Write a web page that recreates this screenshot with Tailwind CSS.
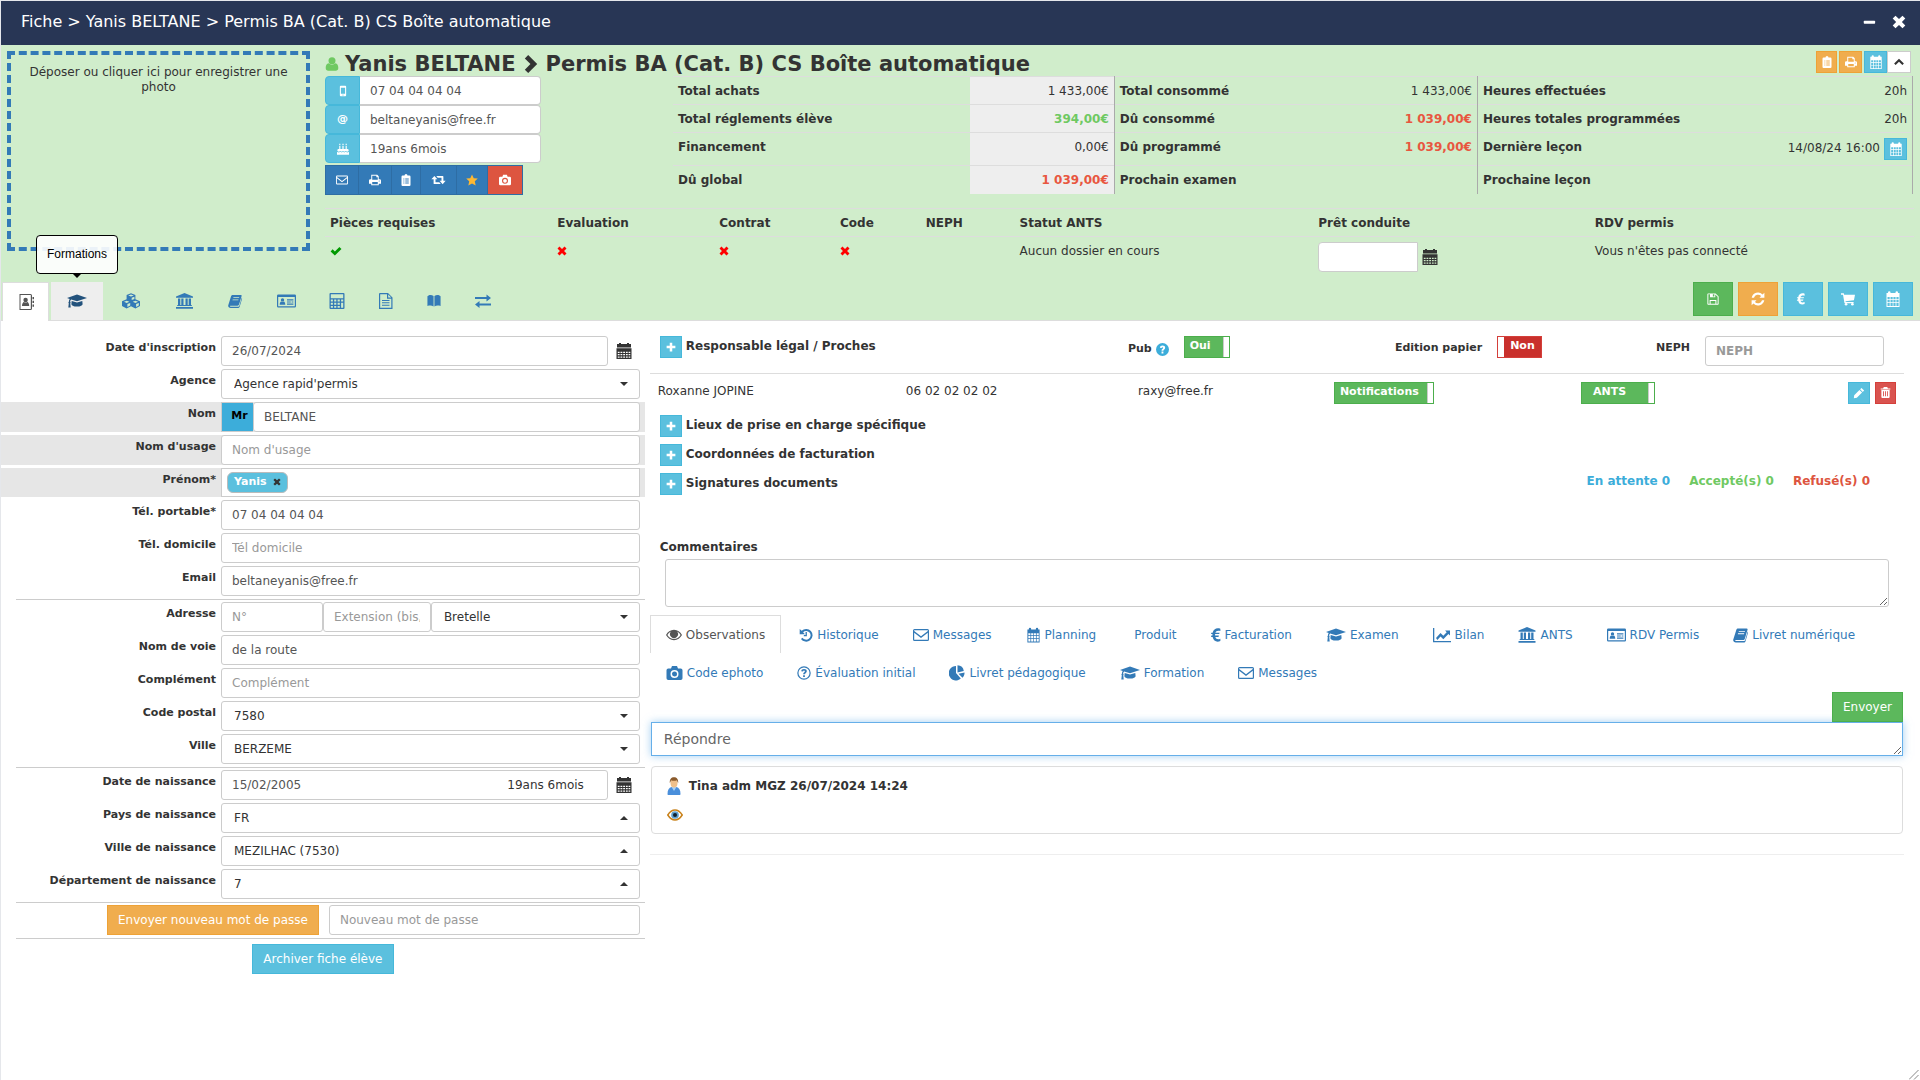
<!DOCTYPE html>
<html lang="fr">
  <head>
    <meta charset="UTF-8" />
    <meta name="viewport" content="width=device-width, initial-scale=1.0" />
    <title>Fiche | Yanis BELTANE</title>
    <script src="https://cdn.jsdelivr.net/npm/@tailwindcss/browser@4"></script>
  </head>
  <body
    class="min-h-screen flex flex-col bg-white border-l border-t border-gray-200 text-[#333] text-xs font-['DejaVu_Sans',Verdana,sans-serif]"
  >
    <!-- icon sprite -->
    <svg class="hidden" xmlns="http://www.w3.org/2000/svg">
      <symbol id="i-user" viewBox="0 0 16 16"><circle cx="8" cy="4.4" r="4" /><path d="M4.2 7.2C1.8 7.6.8 9.8.8 12.6.8 14.6 2 15.8 3.8 15.8h8.4c1.8 0 3-1.2 3-3.2 0-2.8-1-5-3.4-5.4a5.2 5.2 0 0 1-7.6 0Z" /></symbol>
      <symbol id="i-chevron" viewBox="0 0 16 16"><path d="M2.500 3 5.500 0l8 8-8 8-3-3 5-5Z" /></symbol>
      <symbol id="i-up" viewBox="0 0 16 16"><path d="m8 3.500 6.500 6.500-2 2L8 7.500 3.500 12l-2-2Z" /></symbol>
      <symbol id="i-mobile" viewBox="0 0 16 16"><path fill-rule="evenodd" d="M5 1h6a1.200 1.200 0 0 1 1.200 1.200v11.600A1.200 1.200 0 0 1 11 15H5a1.200 1.200 0 0 1-1.200-1.200V2.200A1.200 1.200 0 0 1 5 1Zm.2 2.500v8h5.600v-8Zm2.800 9a.8.8 0 1 0 0 1.600.8.8 0 0 0 0-1.600Z" /></symbol>
      <symbol id="i-cake" viewBox="0 0 16 16"><path d="M3 1h1.500v2H3zM7.200 1h1.600v2H7.200zM11.500 1H13v2h-1.500zM3 4h1.500v4h2.700V4h1.600v4h2.700V4H13v4h1a1.500 1.500 0 0 1 1.500 1.500v1l-2 1-2-1-1.800 1-1.700-1-1.700 1-1.800-1-2 1-2-1v-1A1.500 1.500 0 0 1 2 8h1ZM0 12l2.500.8 2-1 1.800 1 1.700-1 1.700 1 1.800-1 2 1L16 12v3.500H0Z" /></symbol>
      <symbol id="i-mail" viewBox="0 0 16 16"><path fill-rule="evenodd" d="M1.500 2h13A1.500 1.500 0 0 1 16 3.500v9a1.500 1.500 0 0 1-1.500 1.500h-13A1.500 1.500 0 0 1 0 12.500v-9A1.500 1.500 0 0 1 1.500 2Zm-.3 1.200v.8L8 9.300l6.800-5.300v-.8Zm0 2.600v7h13.600v-7L8 11Z" /></symbol>
      <symbol id="i-print" viewBox="0 0 16 16"><path fill-rule="evenodd" d="M3 1h8l2 2v4h1.200A1.800 1.800 0 0 1 16 8.800V13h-3v2H3v-2H0V8.800A1.800 1.800 0 0 1 1.800 7H3Zm1.300 1.300v5.200h7.400V4.200H9.800V2.300Zm0 8.500v3h7.400v-3ZM13.600 8.500a.7.7 0 1 0 0 1.400.7.7 0 0 0 0-1.400Z" /></symbol>
      <symbol id="i-clip" viewBox="0 0 16 16"><path fill-rule="evenodd" d="M6 2a2 2 0 0 1 4 0h2.500A1.500 1.500 0 0 1 14 3.500v11a1.500 1.500 0 0 1-1.500 1.500h-9A1.500 1.500 0 0 1 2 14.500v-11A1.500 1.500 0 0 1 3.500 2Zm-1.500 4v1.200h1.300V6Zm2.500 0v1.200h4.700V6ZM4.500 8.700v1.200h1.300V8.700Zm2.500 0v1.200h4.700V8.700Zm-2.500 2.700v1.200h1.300v-1.200Zm2.500 0v1.200h4.700v-1.200Z" /></symbol>
      <symbol id="i-retweet" viewBox="0 0 20 16"><path d="M4.500 2.500 8.500 7H6v4h5l2 2.300H4.200A.8.8 0 0 1 3.500 12.500V7H.5ZM7 2.700h8.800a.8.8 0 0 1 .7.800V9h3l-4 4.500-4-4.500H14V5H9Z" /></symbol>
      <symbol id="i-star" viewBox="0 0 16 16"><path d="m8 .5 2.300 5 5.500.6-4.100 3.700 1.200 5.500L8 12.500l-4.900 2.800 1.200-5.500L.2 6.100l5.500-.6Z" /></symbol>
      <symbol id="i-camera" viewBox="0 0 16 16"><path fill-rule="evenodd" d="M5.500 1h5l1 2.500h2.700A1.800 1.800 0 0 1 16 5.300v7.900a1.800 1.800 0 0 1-1.800 1.800H1.800A1.800 1.800 0 0 1 0 13.200V5.300a1.800 1.800 0 0 1 1.800-1.800h2.700ZM8 5a4 4 0 1 0 0 8 4 4 0 0 0 0-8Zm0 1.500a2.500 2.500 0 1 1 0 5 2.500 2.500 0 0 1 0-5Z" /></symbol>
      <symbol id="i-cal" viewBox="0 0 16 16"><path fill-rule="evenodd" d="M3 1.500a1.200 1.200 0 0 1 2.500 0V2h5v-.5a1.200 1.200 0 0 1 2.500 0V2h1.500v14h-13V2H3ZM2.500 6v2.200h2.200V6Zm3 0v2.200h2.200V6Zm2.900 0v2.200h2.200V6Zm3 0v2.200h2.200V6ZM2.500 9v2.300h2.200V9Zm3 0v2.300h2.200V9Zm2.900 0v2.300h2.200V9Zm3 0v2.300h2.200V9Zm-8.900 3.100V15h2.200v-2.900Zm3 0V15h2.200v-2.900Zm2.900 0V15h2.200v-2.900Zm3 0V15h2.200v-2.900Z" /></symbol>
      <symbol id="i-date" viewBox="0 0 16 16"><path fill-rule="evenodd" d="M1 1h2V0h2v1h6V0h2v1h2v3.500H1ZM.5 5.300h15V16H.5Zm1.300 3.400v1.300h1.800V8.700Zm2.700 0v1.300h1.800V8.700Zm2.700 0v1.300H9V8.700Zm2.700 0v1.300h1.800V8.700Zm2.700 0v1.300h1.700V8.700ZM1.800 11v1.300h1.800V11Zm2.700 0v1.300h1.800V11Zm2.700 0v1.300H9V11Zm2.700 0v1.300h1.800V11Zm2.700 0v1.300h1.700V11ZM1.800 13.400v1.300h1.800v-1.300Zm2.700 0v1.300h1.800v-1.300Zm2.700 0v1.300H9v-1.300Zm2.700 0v1.300h1.800v-1.300Zm2.700 0v1.300h1.700v-1.300Z" /></symbol>
      <symbol id="i-check" viewBox="0 0 16 16"><path d="m.8 8.500 2.700-2.700 3 3 6-6.300 2.800 2.700L6.500 14Z" /></symbol>
      <symbol id="i-x" viewBox="0 0 16 16"><path d="M4 .8 8 4.700 12 .8 15.200 4 11.300 8l3.900 4-3.200 3.200-4-3.900-4 3.900L.8 12l3.900-4L.8 4Z" /></symbol>
      <symbol id="i-minus" viewBox="0 0 16 16"><rect x="2" y="6.500" width="13" height="3.500" rx=".8" /></symbol>
      <symbol id="i-plus" viewBox="0 0 16 16"><path d="M6 1h4v5h5v4h-5v5H6v-5H1V6h5Z" /></symbol>
      <symbol id="i-book-user" viewBox="0 0 16 16"><path fill-rule="evenodd" d="M1.500 0h11A1.500 1.500 0 0 1 14 1.500v13a1.500 1.500 0 0 1-1.500 1.500h-11V0Zm1 1v14h10.300V1Z" /><circle cx="7.600" cy="6" r="2.200" /><path d="M4 12c0-2.500 1-3.800 2-4 1 .8 2.200.8 3.200 0 1 .2 2 1.500 2 4ZM14.500 3H16v2.300h-1.500zM14.500 6.800H16v2.300h-1.500zM14.500 10.500H16v2.300h-1.500z" /></symbol>
      <symbol id="i-grad" viewBox="0 0 20 16"><path d="M10 1.500 20 5l-10 3.300L4.200 6.500c-.8.600-1 1.300-1 2.300.5.300.5 1.200.1 1.500l.4 4.200H1.300l.5-4.200c-.5-.4-.4-1.200.1-1.500 0-1.100.2-2 .8-2.800L0 5ZM4.700 7.900 10 9.600l5.300-1.700.3 3c.1 1.500-2.600 2.600-5.600 2.600s-5.700-1.100-5.600-2.600Z" /></symbol>
      <symbol id="i-cubes" viewBox="0 0 20 16"><path fill-rule="evenodd" d="m10 .2 4.400 1.700v4.400l4.600 1.900v4.900L14.400 15.500 10 13.300l-4.400 2.200L1 13.100V8.200l4.600-1.900V1.900ZM7.200 2.500 10 3.600l2.800-1.100L10 1.400Zm3.500 2.300v2.300l2.700-1.100V3.700ZM3 8.800l2.700 1.100 2.700-1.100-2.700-1.100Zm3.400 2.300v2.800l2.800-1.400V9.900Zm5.300-2.300 2.700 1.100 2.700-1.100-2.700-1.100Zm3.400 2.300v2.800l2.700-1.400V9.900Z" /></symbol>
      <symbol id="i-bank" viewBox="0 0 17 16"><path d="M8.500 0 17 3.500v1.300H0V3.500ZM2 5.600h2.300v6.500h1V5.600h2.200v6.500h2V5.600h2.200v6.500h1V5.600H15v6.500h.8v1H1.200v-1H2ZM0 14h17v1.800H0Z" /></symbol>
      <symbol id="i-book" viewBox="0 0 16 16"><path fill-rule="evenodd" d="M5.500 1h9c.9 0 1.300.6 1 1.500L12.600 12c-.3.900-.9 1.300-1.800 1.300H3c-.7 0-.8.600-.3 1.200h8.800c.8 0 1.200-.4 1.500-1.200l2.700-9c.5.300.4.900.3 1.400l-2.600 8.600C13.100 15.400 12.400 16 11.300 16H3c-1.600 0-3-1.400-2.800-2.900L3.600 2.400C3.900 1.500 4.500 1 5.500 1Zm.8 2.600-.3 1h6.600l.3-1Zm-.9 2.600-.3 1h6.600l.3-1Z" /></symbol>
      <symbol id="i-card" viewBox="0 0 19 16"><path fill-rule="evenodd" d="M1.300 1.500h16.400A1.300 1.300 0 0 1 19 2.800v10.400a1.300 1.300 0 0 1-1.300 1.300H1.300A1.300 1.300 0 0 1 0 13.200V2.800a1.300 1.300 0 0 1 1.300-1.300ZM1.200 4v9.300h16.600V4Z" /><circle cx="5.500" cy="6.900" r="1.700" /><path d="M2.700 11.700c0-2 .7-3 1.600-3.300.7.600 1.700.6 2.400 0 .9.300 1.600 1.300 1.600 3.300ZM10 6.200h6.400v1.200H10zM10 8.400h3.800v1.200H10zM14.600 8.400h1.800v1.200h-1.800zM10 10.500h6.400v1.200H10z" /></symbol>
      <symbol id="i-calc" viewBox="0 0 16 16"><path fill-rule="evenodd" d="M1.500 0h13A1 1 0 0 1 15.500 1v14a1 1 0 0 1-1 1h-13a1 1 0 0 1-1-1V1a1 1 0 0 1 1-1Zm.3 1.200v4h12.400v-4ZM1.800 6.500v2h2.100v-2Zm3.400 0v2h2.100v-2Zm3.400 0v2h2.200v-2Zm3.500 0v2h2.100v-2ZM1.800 9.700v2h2.100v-2Zm3.400 0v2h2.100v-2Zm3.400 0v2h2.200v-2Zm3.500 0v5h2.100v-5ZM1.800 12.900v1.800h2.100v-1.800Zm3.400 0v1.800h2.100v-1.800Zm3.400 0v1.800h2.200v-1.800Z" /></symbol>
      <symbol id="i-file" viewBox="0 0 16 16"><path fill-rule="evenodd" d="M2 0h8l4.500 4.500V16H1V1a1 1 0 0 1 1-1Zm.2 1.200v13.600h11.100V5.700H9V1.200Zm8 .3v3h3ZM4 7h7.500v1H4Zm0 2.300h7.500v1H4Zm0 2.400h7.500v1H4Z" /></symbol>
      <symbol id="i-open" viewBox="0 0 16 16"><path d="M.5 2.500 1.800 1.600c2-.6 4-.4 5.700.8v11.800C5.500 12.900 3 13 .5 13.700ZM15.500 2.500l-1.300-.9c-2-.6-4-.4-5.700.8v11.800c2-1.300 4.500-1.200 7-.5Z" /></symbol>
      <symbol id="i-swap" viewBox="0 0 16 16"><path d="M0 4h11.500V1.500L16 5l-4.500 3.500V6H0ZM16 12.500H4.500V15L0 11.500 4.500 8v2.500H16Z" /></symbol>
      <symbol id="i-save" viewBox="0 0 16 16"><path fill-rule="evenodd" d="M1.500.5h10L15.500 4.500v10a1 1 0 0 1-1 1h-13a1 1 0 0 1-1-1v-13a1 1 0 0 1 1-1Zm.3 1.300v12.400h1.700V9.300h9v4.900h1.700V5.100L11 1.900v3.900H4v-4Zm6 0v2.700h2V1.800Zm-3 8.800v3.600h6.400v-3.600Z" /></symbol>
      <symbol id="i-refresh" viewBox="0 0 16 16"><path d="M.8 6.500A7.300 7.300 0 0 1 13.200 2.800L15.300.9v5.600H9.700l1.800-1.900A4.800 4.800 0 0 0 3.400 6.500ZM15.200 9.500A7.300 7.300 0 0 1 2.800 13.200L.7 15.100V9.500h5.600l-1.800 1.900a4.800 4.800 0 0 0 8.100-1.900Z" /></symbol>
      <symbol id="i-euro" viewBox="0 0 11 16"><path d="M10.300 1v2.700C7.800 2.700 5.500 3.200 4.800 5.500h4.700L9 7H4.500v1.600h4.200l-.5 1.600H4.800c.7 2.400 3 3 5.500 1.800v2.700C6.500 16.200 2.700 15 1.800 10.200H0l.4-1.600h1.200V7H0l.4-1.500h1.400C2.700 1 6.500-.4 10.300 1Z" /></symbol>
      <symbol id="i-cart" viewBox="0 0 16 16"><path d="M0 1.500h3.200l.4 1.500H16l-1.200 6.500-9.700 1 .3 1h9v1.300H4L2.300 3H0Z" /><circle cx="5.800" cy="14" r="1.500" /><circle cx="13" cy="14" r="1.500" /></symbol>
      <symbol id="i-help" viewBox="0 0 16 16"><circle cx="8" cy="8" r="8" /><path fill="#fff" d="M4.800 5.700C5 3.900 6.200 3 8 3c2 0 3.300 1 3.300 2.700 0 2.200-2.200 2.200-2.200 3.900H6.800c0-2.400 2-2.400 2-3.700 0-.5-.3-.8-.9-.8s-.8.300-.9.900ZM6.800 10.600h2.300v2.300H6.800Z" /></symbol>
      <symbol id="i-help-o" viewBox="0 0 16 16"><path fill-rule="evenodd" d="M8 .3a7.700 7.700 0 1 1 0 15.400A7.700 7.700 0 0 1 8 .3Zm0 1.400a6.300 6.300 0 1 0 0 12.600A6.300 6.300 0 0 0 8 1.700Z" /><path d="M4.800 5.900C5 4.200 6.200 3.400 8 3.400c2 0 3.200 1 3.200 2.500 0 2.200-2.200 2.100-2.200 3.600H7c0-2.300 2-2.200 2-3.500 0-.5-.4-.8-1-.8s-1 .4-1.100 1ZM7 10.500h2v2H7Z" /></symbol>
      <symbol id="i-pencil" viewBox="0 0 16 16"><path d="M11.300 1.200 14.800 4.700 13 6.500 9.500 3ZM8.600 3.900l3.500 3.500-7 7-4 .5.500-4Z" /></symbol>
      <symbol id="i-trash" viewBox="0 0 16 16"><path fill-rule="evenodd" d="M5.500 0h5l1 2h3.500v1.500H1V2h3.500ZM2 4.500h12V14.500A1.500 1.500 0 0 1 12.500 16h-9A1.500 1.500 0 0 1 2 14.500ZM4.500 6v7.500h1.300V6Zm2.900 0v7.500h1.300V6Zm2.900 0v7.500h1.200V6Z" /></symbol>
      <symbol id="i-eye" viewBox="0 0 16 16"><path fill-rule="evenodd" d="M8 2.800c3.500 0 6.300 2.200 8 5.200-1.700 3-4.500 5.200-8 5.200S1.700 11 0 8c1.700-3 4.500-5.200 8-5.200ZM4.900 4.600A7.600 7.600 0 0 0 1.400 8c1.500 2.500 4 4 6.600 4s5.100-1.500 6.600-4a7.600 7.600 0 0 0-3.500-3.400 4 4 0 1 1-6.200 0Z" /><path d="M8 4a2.900 2.900 0 1 1-2.900 2.900h1.400A1.500 1.500 0 0 1 8 5.400Z" /></symbol>
      <symbol id="i-history" viewBox="0 0 16 16"><path d="M.8 1 3 3.200A7.300 7.300 0 1 1 2.200 12.500l1.800-1.500a5 5 0 1 0 .7-6.200L6.800 7H.8ZM7.500 4.500H9v5H5.500V8h2Z" /></symbol>
      <symbol id="i-chart" viewBox="0 0 18 16"><path d="M0 1h1.300v13H18v1.300H0ZM3 11l4.500-5 2.800 2.800 3.400-3.600-1.600-1.600H17v5l-1.600-1.700-5.100 5.400-2.800-2.800-3.100 3.400Z" /></symbol>
      <symbol id="i-pie" viewBox="0 0 16 16"><path d="M7 1v7l4.800 5.500A7.200 7.200 0 1 1 7 1ZM8.500.3A6.700 6.700 0 0 1 14.800 6L8.500 7.500ZM9.500 8.800l6-1.300c.2 2-.6 4-2 5.300Z" /></symbol>
    </svg>

    <!-- title bar -->
    <header class="flex items-center justify-between h-11 pl-5 pr-[14px] pb-0.5 bg-[#283655] text-white">
      <h1 class="text-base">Fiche &gt; Yanis BELTANE &gt; Permis BA (Cat. B) CS Boîte automatique</h1>
      <div class="flex items-center gap-4">
        <button aria-label="Réduire"><svg class="size-3.5 fill-current"><use href="#i-minus" /></svg></button>
        <button aria-label="Fermer"><svg class="size-3.5 fill-current"><use href="#i-x" /></svg></button>
      </div>
    </header>

    <section class="bg-[#d0edcb]">
      <div class="flex gap-[15px] pl-1.5 pr-1.5">
        <!-- photo drop zone -->
        <button class="w-[303px] h-[200px] mt-1.5 shrink-0 border-4 border-dashed border-[#337ab7] px-4 pt-2.5 flex justify-center leading-[15px]">
          Déposer ou cliquer ici pour enregistrer une photo
        </button>

        <div class="grow min-w-0">
          <div class="flex items-start justify-between h-[31px]">
            <h2 class="flex items-center gap-1.5 pt-[5px] text-[21px] leading-7 font-bold whitespace-nowrap">
              <svg class="w-[14px] h-4 fill-[#6fc962]"><use href="#i-user" /></svg>
              <span>Yanis BELTANE</span>
              <svg class="size-[18px] fill-[#333]"><use href="#i-chevron" /></svg>
              <span>Permis BA (Cat. B) CS Boîte automatique</span>
            </h2>
            <div class="flex pt-1.5 pr-[3px]">
              <button aria-label="Dossier" class="grid place-items-center w-[21px] h-[22px] mr-0.5 bg-[#f0ad4e] border border-[#eea236] text-white"><svg class="size-3 fill-current"><use href="#i-clip" /></svg></button>
              <button aria-label="Imprimer" class="grid place-items-center w-[23px] h-[22px] mr-0.5 bg-[#f0ad4e] border border-[#eea236] text-white"><svg class="size-3 fill-current"><use href="#i-print" /></svg></button>
              <button aria-label="Planning" class="grid place-items-center w-[23px] h-[22px] bg-[#5bc0de] border border-[#46b8da] text-white"><svg class="size-3.5 fill-current"><use href="#i-cal" /></svg></button>
              <button aria-label="Replier" class="grid place-items-center w-6 h-[22px] bg-white border border-[#ccc]"><svg class="size-3 fill-[#333]"><use href="#i-up" /></svg></button>
            </div>
          </div>

          <div class="flex items-start">
            <div class="w-[348px] shrink-0">
              <div class="w-[216px]">
                <div class="flex h-[29px]">
                  <label for="h-mobile" class="grid place-items-center w-[35px] rounded-l-sm bg-[#5bc0de] border border-[#46b8da] text-white"><svg class="size-3 fill-current"><title>Mobile</title><use href="#i-mobile" /></svg></label>
                  <input id="h-mobile" class="grow min-w-0 px-2.5 bg-white border border-l-0 border-[#ccc] rounded-r-sm text-[#555]" value="07 04 04 04 04" />
                </div>
                <div class="flex h-[29px]">
                  <label for="h-mail" class="grid place-items-center w-[35px] rounded-l-sm bg-[#5bc0de] border border-[#46b8da] text-white text-[11px] font-bold">@</label>
                  <input id="h-mail" class="grow min-w-0 px-2.5 bg-white border border-l-0 border-[#ccc] rounded-r-sm text-[#555]" value="beltaneyanis@free.fr" />
                </div>
                <div class="flex h-[29px]">
                  <label for="h-age" class="grid place-items-center w-[35px] rounded-l-sm bg-[#5bc0de] border border-[#46b8da] text-white"><svg class="w-3.5 h-3 fill-current"><title>Âge</title><use href="#i-cake" /></svg></label>
                  <input id="h-age" class="grow min-w-0 px-2.5 bg-white border border-l-0 border-[#ccc] rounded-r-sm text-[#555]" value="19ans 6mois" />
                </div>
              </div>
              <div class="inline-flex h-[30px] mt-0.5 bg-[#337ab7] border border-[#2e6da4] divide-x divide-[#2e6da4] text-white align-top">
                <button aria-label="Message" class="px-2.5"><svg class="size-3 fill-current"><use href="#i-mail" /></svg></button>
                <button aria-label="Imprimer" class="px-2.5"><svg class="size-3 fill-current"><use href="#i-print" /></svg></button>
                <button aria-label="Dossier" class="px-2"><svg class="size-3 fill-current"><use href="#i-clip" /></svg></button>
                <button aria-label="Transférer" class="px-2.5"><svg class="w-[15px] h-3 fill-current"><use href="#i-retweet" /></svg></button>
                <button aria-label="Favori" class="px-[9px] text-[#fdb833]"><svg class="size-3 fill-current"><use href="#i-star" /></svg></button>
                <button aria-label="Photo" class="px-2.5 bg-[#dd5540]"><svg class="w-3.5 h-3 fill-current"><use href="#i-camera" /></svg></button>
              </div>
            </div>

            <!-- totals -->
            <table class="w-full table-fixed border-collapse text-left mr-px [&_th]:px-[5px] [&_td]:px-[5px] [&_th]:align-top [&_td]:align-top [&_th]:pt-1.5 [&_td]:pt-1.5 [&_td]:text-right [&_tr]:border-t [&_tr]:border-[#ddd] [&_tr]:h-7 leading-4">
              <colgroup>
                <col class="w-[24%]" />
                <col class="w-[11.600%]" />
                <col class="w-[18.300%]" />
                <col class="w-[11%]" />
                <col class="w-[20%]" />
                <col class="w-[15.100%]" />
              </colgroup>
              <tbody>
                <tr>
                  <th scope="row">Total achats</th>
                  <td class="bg-[#eee] border-r border-[#aaa]">1 433,00€</td>
                  <th scope="row">Total consommé</th>
                  <td class="border-r border-[#aaa]">1 433,00€</td>
                  <th scope="row">Heures effectuées</th>
                  <td class="border-r border-[#aaa]">20h</td>
                </tr>
                <tr>
                  <th scope="row">Total réglements élève</th>
                  <td class="bg-[#eee] border-r border-[#aaa] font-bold text-[#6fc962]">394,00€</td>
                  <th scope="row">Dû consommé</th>
                  <td class="border-r border-[#aaa] font-bold text-[#e8563f]">1 039,00€</td>
                  <th scope="row">Heures totales programmées</th>
                  <td class="border-r border-[#aaa]">20h</td>
                </tr>
                <tr>
                  <th scope="row">Financement</th>
                  <td class="bg-[#eee] border-r border-[#aaa]">0,00€</td>
                  <th scope="row">Dû programmé</th>
                  <td class="border-r border-[#aaa] font-bold text-[#e8563f]">1 039,00€</td>
                  <th scope="row">Dernière leçon</th>
                  <td class="border-r border-[#aaa]">
                    <div class="flex justify-end items-start gap-1 -mt-px pb-[5px]">
                      <span class="pt-0.5">14/08/24 16:00</span>
                      <button aria-label="Voir la leçon" class="grid place-items-center w-[23px] h-[22px] bg-[#5bc0de] border border-[#46b8da] text-white"><svg class="size-3.5 fill-current"><use href="#i-cal" /></svg></button>
                    </div>
                  </td>
                </tr>
                <tr>
                  <th scope="row">Dû global</th>
                  <td class="bg-[#eee] border-r border-[#aaa] font-bold text-[#e8563f]">1 039,00€</td>
                  <th scope="row">Prochain examen</th>
                  <td class="border-r border-[#aaa]"></td>
                  <th scope="row">Prochaine leçon</th>
                  <td class="border-r border-[#aaa]"></td>
                </tr>
              </tbody>
            </table>
          </div>

          <!-- status -->
          <table class="w-full table-fixed mt-[13px] text-left leading-4 [&_th]:px-[5px] [&_td]:px-[5px] [&_td]:align-top [&_td]:pt-1.5">
            <colgroup>
              <col class="w-[14.300%]" />
              <col class="w-[10.200%]" />
              <col class="w-[7.600%]" />
              <col class="w-[5.400%]" />
              <col class="w-[5.900%]" />
              <col class="w-[18.800%]" />
              <col class="w-[17.400%]" />
              <col />
            </colgroup>
            <thead>
              <tr class="h-7 border-t border-b border-[#ddd]">
                <th>Pièces requises</th>
                <th>Evaluation</th>
                <th>Contrat</th>
                <th>Code</th>
                <th>NEPH</th>
                <th>Statut ANTS</th>
                <th><label for="pret">Prêt conduite</label></th>
                <th>RDV permis</th>
              </tr>
            </thead>
            <tbody>
              <tr class="h-[45px]">
                <td><svg class="size-3 mt-0.5 fill-[#090]"><title>Oui</title><use href="#i-check" /></svg></td>
                <td><svg class="size-2.5 mt-[3px] fill-[#f00]"><title>Non</title><use href="#i-x" /></svg></td>
                <td><svg class="size-2.5 mt-[3px] fill-[#f00]"><title>Non</title><use href="#i-x" /></svg></td>
                <td><svg class="size-2.5 mt-[3px] fill-[#f00]"><title>Non</title><use href="#i-x" /></svg></td>
                <td></td>
                <td>Aucun dossier en cours</td>
                <td>
                  <div class="flex items-center gap-1 -mt-px">
                    <input id="pret" class="w-[100px] h-[30px] px-2.5 bg-white border border-[#ccc] rounded-l-sm text-[#555]" />
                    <button aria-label="Choisir une date"><svg class="size-4 fill-[#333]"><use href="#i-date" /></svg></button>
                  </div>
                </td>
                <td>Vous n'êtes pas connecté</td>
              </tr>
            </tbody>
          </table>
        </div>
      </div>

      <!-- main tabs -->
      <div class="flex justify-between items-start h-[39px] pl-px pr-[7px] border-b border-[#ddd]">
        <nav class="flex gap-0.5 h-[39px]">
          <a href="#eleve" aria-label="Elève" class="grid place-items-center w-[47px] bg-white border border-b-0 border-[#ddd] text-[#555]"><svg class="size-4 fill-current"><use href="#i-book-user" /></svg></a>
          <a href="#formations" aria-label="Formations" class="relative grid place-items-center w-[52px] bg-[#eee] border-b border-[#ddd] text-[#23527c]">
            <svg class="w-5 h-4 fill-current"><use href="#i-grad" /></svg>
            <span role="tooltip" class="absolute bottom-[46px] left-1/2 -translate-x-1/2 flex items-center w-[82px] h-[39px] justify-center border border-black rounded bg-white/90 text-black text-xs font-['Liberation_Sans',Arial,sans-serif]">
              Formations
              <svg class="absolute top-full left-1/2 -translate-x-1/2 w-2.5 h-[5px]" viewBox="0 0 10 5"><path d="M0 0h10L5 5Z" /></svg>
            </span>
          </a>
          <a href="#packs" aria-label="Packs" class="grid place-items-center w-[52px] text-[#337ab7]"><svg class="w-5 h-4 fill-current"><use href="#i-cubes" /></svg></a>
          <a href="#banque" aria-label="Financement" class="grid place-items-center w-[51px] text-[#337ab7]"><svg class="w-[17px] h-4 fill-current"><use href="#i-bank" /></svg></a>
          <a href="#livret" aria-label="Livret" class="grid place-items-center w-[46px] text-[#337ab7]"><svg class="w-4 h-3.5 fill-current"><use href="#i-book" /></svg></a>
          <a href="#carte" aria-label="Carte" class="grid place-items-center w-[52px] text-[#337ab7]"><svg class="w-[19px] h-4 fill-current"><use href="#i-card" /></svg></a>
          <a href="#compte" aria-label="Compte" class="grid place-items-center w-[46px] text-[#337ab7]"><svg class="size-4 fill-current"><use href="#i-calc" /></svg></a>
          <a href="#documents" aria-label="Documents" class="grid place-items-center w-12 text-[#337ab7]"><svg class="size-4 fill-current"><use href="#i-file" /></svg></a>
          <a href="#cours" aria-label="Cours" class="grid place-items-center w-[43px] text-[#337ab7]"><svg class="size-3.5 fill-current"><use href="#i-open" /></svg></a>
          <a href="#transferts" aria-label="Transferts" class="grid place-items-center w-[52px] text-[#337ab7]"><svg class="size-4 fill-current"><use href="#i-swap" /></svg></a>
        </nav>
        <div class="flex gap-[5px] text-white">
          <button aria-label="Enregistrer" class="grid place-items-center w-10 h-[34px] bg-[#5cb85c] border border-[#4cae4c]"><svg class="size-3 fill-current"><use href="#i-save" /></svg></button>
          <button aria-label="Actualiser" class="grid place-items-center w-10 h-[34px] bg-[#f0ad4e] border border-[#eea236]"><svg class="size-3.5 fill-current"><use href="#i-refresh" /></svg></button>
          <button aria-label="Paiement" class="grid place-items-center w-10 h-[34px] pr-1 bg-[#5bc0de] border border-[#46b8da]"><svg class="w-2.5 h-3 fill-current"><use href="#i-euro" /></svg></button>
          <button aria-label="Panier" class="grid place-items-center w-10 h-[34px] bg-[#5bc0de] border border-[#46b8da]"><svg class="size-3.5 fill-current"><use href="#i-cart" /></svg></button>
          <button aria-label="Planning" class="grid place-items-center w-10 h-[34px] bg-[#5bc0de] border border-[#46b8da]"><svg class="size-4 fill-current"><use href="#i-cal" /></svg></button>
        </div>
      </div>
    </section>

    <main class="flex items-start pt-[15px]">
      <!-- identity form -->
      <form class="w-[33.550%] shrink-0 text-[#555] [&_input]:h-[30px] [&_input]:px-2.5 [&_input]:bg-white [&_input]:border [&_input]:border-[#ccc] [&_input]:rounded-[3px] [&_input]:min-w-0 [&_input]:placeholder:text-[#999] [&_select]:appearance-none [&_select]:w-full [&_select]:h-[30px] [&_select]:px-3 [&_select]:bg-white [&_select]:border [&_select]:border-[#ccc] [&_select]:rounded-[3px] [&_select]:text-[#333]">
        <div class="grid grid-cols-[215px_1fr] gap-x-[5px] pr-[5px] mb-[3px]">
          <label for="inscription" class="pt-[5px] text-right text-[11px] font-bold text-[#333]">Date d'inscription</label>
          <div class="flex items-center">
            <input id="inscription" class="grow" value="26/07/2024" />
            <button type="button" aria-label="Choisir une date" class="mx-2"><svg class="size-4 fill-[#333]"><use href="#i-date" /></svg></button>
          </div>
        </div>
        <div class="grid grid-cols-[215px_1fr] gap-x-[5px] pr-[5px] mb-[3px]">
          <label for="agence" class="pt-[5px] text-right text-[11px] font-bold text-[#333]">Agence</label>
          <div class="relative">
            <select id="agence"><option>Agence rapid'permis</option></select>
            <svg class="absolute right-3 top-[13px] w-2 h-1 pointer-events-none fill-[#333]" viewBox="0 0 8 4"><path d="M0 0h8L4 4Z" /></svg>
          </div>
        </div>
        <div class="grid grid-cols-[215px_1fr] gap-x-[5px] pr-[5px] mb-[3px] bg-[#e6e6e6]">
          <label for="nom" class="pt-[5px] text-right text-[11px] font-bold text-[#333]">Nom</label>
          <div class="flex">
            <button type="button" class="w-8 border border-r-0 border-[#ccc] bg-[#3cadda] text-[11px] font-bold text-black pl-1">Mr</button>
            <input id="nom" class="grow" value="BELTANE" />
          </div>
        </div>
        <div class="grid grid-cols-[215px_1fr] gap-x-[5px] pr-[5px] mb-[3px] bg-[#e6e6e6]">
          <label for="usage" class="pt-[5px] text-right text-[11px] font-bold text-[#333]">Nom d'usage</label>
          <input id="usage" placeholder="Nom d'usage" />
        </div>
        <div class="grid grid-cols-[215px_1fr] gap-x-[5px] pr-[5px] mb-[3px] bg-[#e6e6e6]">
          <span class="pt-[5px] text-right text-[11px] font-bold text-[#333]">Prénom*</span>
          <div class="flex items-center h-[29px] pl-[5px] bg-white border border-[#ccc]">
            <span class="flex items-center gap-1.5 h-[21px] px-1.5 bg-[#5bc0de] border border-[#bbb] rounded-md text-white text-[11px] font-bold">
              Yanis
              <button type="button" aria-label="Supprimer Yanis"><svg class="size-2 fill-[#333]"><use href="#i-x" /></svg></button>
            </span>
          </div>
        </div>
        <div class="grid grid-cols-[215px_1fr] gap-x-[5px] pr-[5px] mb-[3px]">
          <label for="portable" class="pt-[5px] text-right text-[11px] font-bold text-[#333]">Tél. portable*</label>
          <input id="portable" type="tel" value="07 04 04 04 04" />
        </div>
        <div class="grid grid-cols-[215px_1fr] gap-x-[5px] pr-[5px] mb-[3px]">
          <label for="domicile" class="pt-[5px] text-right text-[11px] font-bold text-[#333]">Tél. domicile</label>
          <input id="domicile" type="tel" placeholder="Tél domicile" />
        </div>
        <div class="grid grid-cols-[215px_1fr] gap-x-[5px] pr-[5px] mb-[3px]">
          <label for="email" class="pt-[5px] text-right text-[11px] font-bold text-[#333]">Email</label>
          <input id="email" type="email" value="beltaneyanis@free.fr" />
        </div>
        <hr class="ml-[15px] mb-0.5 border-[#ccc]" />

        <div class="grid grid-cols-[215px_1fr] gap-x-[5px] pr-[5px] mb-[3px]">
          <label for="numero" class="pt-[5px] text-right text-[11px] font-bold text-[#333]">Adresse</label>
          <div class="grid grid-cols-[102fr_108fr_209fr]">
            <input id="numero" placeholder="N°" />
            <input aria-label="Extension" placeholder="Extension (bis, ter)" />
            <div class="relative">
              <select aria-label="Type de voie"><option>Bretelle</option></select>
              <svg class="absolute right-3 top-[13px] w-2 h-1 pointer-events-none fill-[#333]" viewBox="0 0 8 4"><path d="M0 0h8L4 4Z" /></svg>
            </div>
          </div>
        </div>
        <div class="grid grid-cols-[215px_1fr] gap-x-[5px] pr-[5px] mb-[3px]">
          <label for="voie" class="pt-[5px] text-right text-[11px] font-bold text-[#333]">Nom de voie</label>
          <input id="voie" value="de la route" />
        </div>
        <div class="grid grid-cols-[215px_1fr] gap-x-[5px] pr-[5px] mb-[3px]">
          <label for="complement" class="pt-[5px] text-right text-[11px] font-bold text-[#333]">Complément</label>
          <input id="complement" placeholder="Complément" />
        </div>
        <div class="grid grid-cols-[215px_1fr] gap-x-[5px] pr-[5px] mb-[3px]">
          <label for="cp" class="pt-[5px] text-right text-[11px] font-bold text-[#333]">Code postal</label>
          <div class="relative">
            <select id="cp"><option>7580</option></select>
            <svg class="absolute right-3 top-[13px] w-2 h-1 pointer-events-none fill-[#333]" viewBox="0 0 8 4"><path d="M0 0h8L4 4Z" /></svg>
          </div>
        </div>
        <div class="grid grid-cols-[215px_1fr] gap-x-[5px] pr-[5px] mb-[3px]">
          <label for="ville" class="pt-[5px] text-right text-[11px] font-bold text-[#333]">Ville</label>
          <div class="relative">
            <select id="ville"><option>BERZEME</option></select>
            <svg class="absolute right-3 top-[13px] w-2 h-1 pointer-events-none fill-[#333]" viewBox="0 0 8 4"><path d="M0 0h8L4 4Z" /></svg>
          </div>
        </div>
        <hr class="ml-[15px] mb-0.5 border-[#ccc]" />

        <div class="grid grid-cols-[215px_1fr] gap-x-[5px] pr-[5px] mb-[3px]">
          <label for="naissance" class="pt-[5px] text-right text-[11px] font-bold text-[#333]">Date de naissance</label>
          <div class="flex items-center">
            <div class="relative grow flex">
              <input id="naissance" class="grow" value="15/02/2005" />
              <span class="absolute right-6 top-[7px] text-[#333]">19ans 6mois</span>
            </div>
            <button type="button" aria-label="Choisir une date" class="mx-2"><svg class="size-4 fill-[#333]"><use href="#i-date" /></svg></button>
          </div>
        </div>
        <div class="grid grid-cols-[215px_1fr] gap-x-[5px] pr-[5px] mb-[3px]">
          <label for="pays" class="pt-[5px] text-right text-[11px] font-bold text-[#333]">Pays de naissance</label>
          <div class="relative">
            <select id="pays"><option>FR</option></select>
            <svg class="absolute right-3 top-[13px] w-2 h-1 pointer-events-none fill-[#333]" viewBox="0 0 8 4"><path d="M0 4h8L4 0Z" /></svg>
          </div>
        </div>
        <div class="grid grid-cols-[215px_1fr] gap-x-[5px] pr-[5px] mb-[3px]">
          <label for="ville-n" class="pt-[5px] text-right text-[11px] font-bold text-[#333]">Ville de naissance</label>
          <div class="relative">
            <select id="ville-n"><option>MEZILHAC (7530)</option></select>
            <svg class="absolute right-3 top-[13px] w-2 h-1 pointer-events-none fill-[#333]" viewBox="0 0 8 4"><path d="M0 4h8L4 0Z" /></svg>
          </div>
        </div>
        <div class="grid grid-cols-[215px_1fr] gap-x-[5px] pr-[5px] mb-[3px]">
          <label for="dep-n" class="pt-[5px] text-right text-[11px] font-bold text-[#333]">Département de naissance</label>
          <div class="relative">
            <select id="dep-n"><option>7</option></select>
            <svg class="absolute right-3 top-[13px] w-2 h-1 pointer-events-none fill-[#333]" viewBox="0 0 8 4"><path d="M0 4h8L4 0Z" /></svg>
          </div>
        </div>
        <hr class="ml-[15px] mb-0.5 border-[#ccc]" />
        <div class="flex gap-2.5 pl-[106px] pr-[5px] mb-[3px]">
          <button type="button" class="px-2.5 h-[30px] bg-[#f0ad4e] border border-[#eea236] text-white whitespace-nowrap">Envoyer nouveau mot de passe</button>
          <input aria-label="Nouveau mot de passe" class="grow" placeholder="Nouveau mot de passe" />
        </div>
        <hr class="ml-[15px] border-[#ccc]" />
        <div class="flex justify-center mt-[5px]">
          <button type="button" class="px-2.5 h-[30px] bg-[#5bc0de] border border-[#46b8da] text-white">Archiver fiche élève</button>
        </div>
      </form>

      <div class="grow min-w-0 pl-[5px] pr-4">
        <div class="grid grid-cols-[478fr_267fr_261fr_248fr] h-[37px] font-bold">
          <div class="flex items-start gap-1 pl-2.5">
            <button aria-label="Ajouter un proche" class="grid place-items-center w-[22px] h-[22px] bg-[#5bc0de] border border-[#46b8da] text-white"><svg class="size-2.5 fill-current"><use href="#i-plus" /></svg></button>
            <span class="pt-0.5">Responsable légal / Proches</span>
          </div>
          <div class="flex items-start min-w-0 text-[11px]">
            <span class="pt-1.5">Pub</span>
            <svg class="size-[13px] ml-1 mt-[7px] fill-[#3cadda]"><use href="#i-help" /></svg>
            <label class="flex ml-[15px] h-[22px] pl-[5px] bg-[#5cb85c] border border-[#4cae4c] text-white leading-[18px] cursor-pointer">
              <input type="checkbox" class="sr-only" checked />Oui
              <span class="w-1.5 ml-3 bg-white border-l border-[#ccc]"></span>
            </label>
          </div>
          <div class="flex items-start min-w-0 text-[11px]">
            <span class="pt-[5px]">Edition papier</span>
            <label class="flex ml-[15px] h-[22px] pr-1.5 bg-[#c9302c] border border-[#d43f3a] text-white leading-[18px] cursor-pointer">
              <span class="w-1.5 mr-1.5 bg-white"></span>
              <input type="checkbox" class="sr-only" />Non
            </label>
          </div>
          <div class="flex items-start min-w-0">
            <label for="neph" class="pt-[5px] text-[11px]">NEPH</label>
            <input id="neph" placeholder="NEPH" class="grow min-w-0 ml-[15px] mr-5 h-[30px] px-2.5 border border-[#ccc] rounded-[3px] placeholder:text-[#999]" />
          </div>
        </div>

        <div class="grid grid-cols-[248fr_232fr_196fr_247fr_315fr] items-start h-[42px] pt-2 pl-2 pr-2 border-t border-[#ddd]">
          <span class="pt-px">Roxanne JOPINE</span>
          <span class="pt-px">06 02 02 02 02</span>
          <span class="pt-px">raxy@free.fr</span>
          <label class="justify-self-start flex h-[22px] pl-[5px] bg-[#5cb85c] border border-[#4cae4c] text-white text-[11px] font-bold leading-[18px] cursor-pointer">
            <input type="checkbox" class="sr-only" checked />Notifications
            <span class="w-1.5 ml-2 bg-white border-l border-[#ccc]"></span>
          </label>
          <div class="flex items-start">
            <label class="flex h-[22px] pl-[11px] bg-[#5cb85c] border border-[#4cae4c] text-white text-[11px] font-bold leading-[18px] cursor-pointer">
              <input type="checkbox" class="sr-only" checked />ANTS
              <span class="w-1.5 ml-[22px] bg-white border-l border-[#ccc]"></span>
            </label>
            <button aria-label="Modifier" class="grid place-items-center w-[22px] h-[22px] ml-auto mr-[5px] bg-[#5bc0de] border border-[#46b8da] text-white"><svg class="size-3 fill-current"><use href="#i-pencil" /></svg></button>
            <button aria-label="Supprimer" class="grid place-items-center w-[21px] h-[22px] bg-[#d9534f] border border-[#d43f3a] text-white"><svg class="size-[11px] fill-current"><use href="#i-trash" /></svg></button>
          </div>
        </div>

        <div class="grid gap-[7px] pl-2.5 font-bold">
          <div class="flex items-start gap-1">
            <button aria-label="Ajouter un lieu" class="grid place-items-center w-[22px] h-[22px] bg-[#5bc0de] border border-[#46b8da] text-white"><svg class="size-2.5 fill-current"><use href="#i-plus" /></svg></button>
            <span class="pt-0.5">Lieux de prise en charge spécifique</span>
          </div>
          <div class="flex items-start gap-1">
            <button aria-label="Ajouter des coordonnées" class="grid place-items-center w-[22px] h-[22px] bg-[#5bc0de] border border-[#46b8da] text-white"><svg class="size-2.5 fill-current"><use href="#i-plus" /></svg></button>
            <span class="pt-0.5">Coordonnées de facturation</span>
          </div>
          <div class="flex items-start gap-1 pr-[34px]">
            <button aria-label="Ajouter une signature" class="grid place-items-center w-[22px] h-[22px] bg-[#5bc0de] border border-[#46b8da] text-white"><svg class="size-2.5 fill-current"><use href="#i-plus" /></svg></button>
            <span class="pt-0.5 mr-auto">Signatures documents</span>
            <span class="text-[#3cadda]">En attente 0</span>
            <span class="ml-[15px] text-[#6fc962]">Accepté(s) 0</span>
            <span class="ml-[15px] text-[#dd5540]">Refusé(s) 0</span>
          </div>
        </div>

        <div class="pl-2.5 pr-[15px] mt-11">
          <label for="commentaires" class="block font-bold">Commentaires</label>
          <textarea id="commentaires" class="block w-[calc(100%-5px)] h-12 ml-[5px] mt-1 px-2.5 py-1 border border-[#ccc] rounded-[3px] text-[#555]"></textarea>
        </div>

        <!-- activity tabs -->
        <nav class="flex flex-wrap gap-x-0.5 mt-2 text-[#337ab7] [&_a]:flex [&_a]:items-center [&_a]:gap-1 [&_a]:h-[38px] [&_a]:pt-0.5 [&_a]:px-[15px] [&_a]:border [&_a]:border-b-0 [&_svg]:fill-current [&_svg]:h-4">
          <a href="#observations" class="border-[#ddd] text-[#555]"><svg class="w-4"><use href="#i-eye" /></svg>Observations</a>
          <a href="#historique" class="border-transparent"><svg class="w-3.5"><use href="#i-history" /></svg>Historique</a>
          <a href="#messages" class="border-transparent"><svg class="w-4"><use href="#i-mail" /></svg>Messages</a>
          <a href="#planning" class="border-transparent"><svg class="w-[15px]"><use href="#i-cal" /></svg>Planning</a>
          <a href="#produit" class="border-transparent"><span></span>Produit</a>
          <a href="#facturation" class="border-transparent"><svg class="w-2.5"><use href="#i-euro" /></svg>Facturation</a>
          <a href="#examen" class="border-transparent"><svg class="w-5"><use href="#i-grad" /></svg>Examen</a>
          <a href="#bilan" class="border-transparent"><svg class="w-[18px]"><use href="#i-chart" /></svg>Bilan</a>
          <a href="#ants" class="border-transparent"><svg class="w-[18px]"><use href="#i-bank" /></svg>ANTS</a>
          <a href="#rdv" class="border-transparent"><svg class="w-[19px]"><use href="#i-card" /></svg>RDV Permis</a>
          <a href="#numerique" class="border-transparent"><svg class="w-[15px]"><use href="#i-book" /></svg>Livret numérique</a>
          <a href="#ephoto" class="border-transparent"><svg class="w-[17px]"><use href="#i-camera" /></svg>Code ephoto</a>
          <a href="#evaluation" class="border-transparent"><svg class="w-3.5"><use href="#i-help-o" /></svg>Évaluation initial</a>
          <a href="#pedagogique" class="border-transparent"><svg class="w-4"><use href="#i-pie" /></svg>Livret pédagogique</a>
          <a href="#formation" class="border-transparent"><svg class="w-5"><use href="#i-grad" /></svg>Formation</a>
          <a href="#messages-2" class="border-transparent"><svg class="w-4"><use href="#i-mail" /></svg>Messages</a>
        </nav>

        <div class="pl-px pr-px mt-px border-b border-[#eee] pb-5">
          <div class="flex justify-end">
            <button class="px-2.5 h-[30px] bg-[#5cb85c] border border-[#4cae4c] text-white">Envoyer</button>
          </div>
          <textarea aria-label="Répondre" placeholder="Répondre" class="block w-full h-[34px] px-3 py-1.5 text-sm border border-[#66afe9] shadow-[0_0_8px_rgba(102,175,233,0.6)] outline-none placeholder:text-[#666]"></textarea>
          <article class="mt-2.5 h-[68px] px-[15px] pt-2.5 border border-[#ddd] rounded">
            <div class="flex items-center gap-2 font-bold">
              <svg class="w-[14px] h-[18px]" viewBox="0 0 14 18">
                <path fill="#4a8fdb" d="M.5 17c0-4 1.500-6.500 4-7h5c2.500.5 4 3 4 7 0 .6-.5 1-1 1h-11c-.6 0-1-.4-1-1Z" />
                <path fill="#a9d0f5" d="m4.500 10 2.500 4 2.500-4Z" />
                <ellipse cx="7" cy="6" rx="3.500" ry="4.500" fill="#f0c08a" />
                <path fill="#8a5a2b" d="M2.800 6C2.500 2 4.300.2 7 .2S11.500 2 11.200 6c-.7-.7-.9-1.800-1.200-2.700C8 4 6 4 4 3.300 3.700 4.200 3.500 5.300 2.800 6Z" />
              </svg>
              Tina adm MGZ 26/07/2024 14:24
            </div>
            <svg class="w-4 h-3 mt-3.5" viewBox="0 0 16 12">
              <path fill="#fff" stroke="#c9821b" stroke-width="1.500" d="M.8 6C3 2.500 5.300 1 8 1s5 1.500 7.200 5C13 9.500 10.700 11 8 11S3 9.500.8 6Z" />
              <circle cx="8" cy="6" r="3.800" fill="#5d9fce" />
              <circle cx="8" cy="6" r="2" fill="#10202e" />
            </svg>
          </article>
        </div>
      </div>
    </main>
    <svg class="w-2.5 h-2.5 mt-auto ml-auto mr-px stroke-[#888]" viewBox="0 0 10 10"><path d="M0 9.500 9.500 0M5 9.500 9.500 5" /></svg>
  </body>
</html>
